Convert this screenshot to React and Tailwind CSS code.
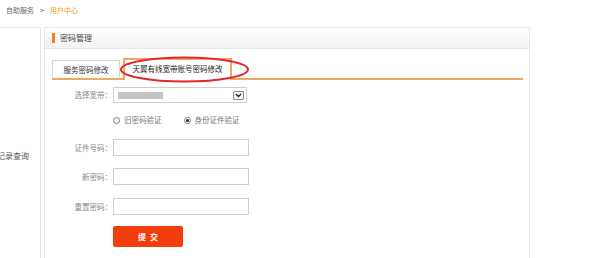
import React from "react";

function Radio({ checked }) {
  return (
    <span className="w-[7px] h-[7px] rounded-full border border-[#7a7a7a] bg-white flex items-center justify-center">
      {checked && <span className="w-[3px] h-[3px] rounded-full bg-[#222]" />}
    </span>
  );
}

function Row({ label, children, className = "" }) {
  return (
    <div className={"flex items-center " + className}>
      <div className="w-[67px] text-right text-[7.5px] leading-[10px] text-[#888]">{label}</div>
      <div className="ml-[1px]">{children}</div>
    </div>
  );
}

export default function App() {
  return (
    <div className="w-[600px] h-[258px] bg-white overflow-hidden relative font-['Noto_Sans_CJK_SC','Noto_Sans',sans-serif]">
      {/* breadcrumb */}
      <div className="h-[27px] pl-[6px] pt-[5px] flex items-start text-[7px] leading-[10px] text-[#666]">
        <span>自助服务</span>
        <span className="mx-[6px]">&gt;</span>
        <span className="text-[#f39a1e]">用户中心</span>
      </div>

      <div className="flex gap-[3px]">
        {/* left sidebar */}
        <div className="w-[41px] h-[231px] border-t border-r border-[#e6e6e6] pt-[123px] overflow-hidden">
          <div className="-ml-[3px] text-[8px] leading-[10px] text-[#555] whitespace-nowrap">记录查询</div>
        </div>

        {/* main panel */}
        <div className="w-[486px] h-[240px] border border-[#e6e6e6]">
          {/* header */}
          <div className="h-[21px] border-b border-[#e6e6e6] bg-gradient-to-b from-white to-[#f1f1f1] flex items-center pl-[7px]">
            <span className="w-[3px] h-[10px] bg-[#f08519]" />
            <span className="ml-[5px] text-[8px] leading-[10px] text-[#444]">密码管理</span>
          </div>

          {/* tabs */}
          <div className="pt-[9px] pl-[7px] pr-[6px]">
            <div className="flex items-end h-[22px] border-b-2 border-[#f2a865]">
              <div className="w-[68px] h-[18px] border border-b-0 border-[#d6d6d6] flex items-center justify-center text-[7.5px] leading-[10px] text-[#333]">
                服务密码修改
              </div>
              <div className="ml-[3px] w-[109px] h-[22px] -mb-[2px] border-2 border-b-0 border-[#f2a865] bg-white flex items-center justify-center pb-[2px] text-[7.5px] leading-[10px] text-[#222]">
                天翼有线宽带账号密码修改
              </div>
            </div>
          </div>

          {/* form */}
          <div className="flex flex-col">
            <Row label="选择宽带：" className="mt-[7px]">
              <div className="w-[134px] h-[16px] border border-[#cfcfcf] flex items-center">
                <span className="ml-[4px] w-[45px] h-[7px] bg-[#c4c4c4] blur-[0.6px]" />
                <span className="ml-auto mr-[2px] w-[11px] h-[9px] border border-[#8a8a8a] rounded-[1px] bg-[#f4f4f4] flex items-center justify-center">
                  <svg width="7" height="5" viewBox="0 0 7 5">
                    <path d="M1 1 L3.5 3.5 L6 1" fill="none" stroke="#222" strokeWidth="1.3" />
                  </svg>
                </span>
              </div>
            </Row>

            <div className="mt-[12px] ml-[68px] flex items-center h-[10px] text-[7.5px] leading-[10px] text-[#777]">
              <Radio />
              <span className="ml-[4px]">旧密码验证</span>
              <span className="ml-[22px]"><Radio checked /></span>
              <span className="ml-[4px]">身份证件验证</span>
            </div>

            <Row label="证件号码：" className="mt-[14px]">
              <div className="w-[136px] h-[17px] border border-[#cfcfcf] bg-white" />
            </Row>
            <Row label="新密码：" className="mt-[12px]">
              <div className="w-[136px] h-[17px] border border-[#cfcfcf] bg-white" />
            </Row>
            <Row label="重置密码：" className="mt-[13px]">
              <div className="w-[136px] h-[17px] border border-[#cfcfcf] bg-white" />
            </Row>

            <div className="mt-[11px] ml-[68px]">
              <button className="w-[70px] h-[21px] rounded-[2px] bg-[#f33c0c] text-white text-[8px] leading-[10px] font-bold tracking-[4px] flex items-center justify-center pl-[4px]">
                提交
              </button>
            </div>
          </div>
        </div>
      </div>

      {/* red annotation ellipse */}
      <svg className="absolute left-[119px] top-[55px]" width="132" height="29" viewBox="0 0 132 29">
        <ellipse cx="65.5" cy="14.5" rx="63.5" ry="12" fill="none" stroke="#e3262b" strokeWidth="2" />
      </svg>
    </div>
  );
}
